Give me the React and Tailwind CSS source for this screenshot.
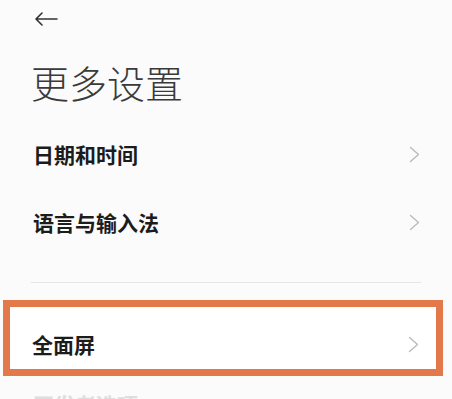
import React from "react";

const font = { fontFamily: '"Noto Sans CJK SC", "Noto Sans", sans-serif' };

function Chevron() {
  return (
    <svg width="11" height="17" viewBox="0 0 11 17" fill="none" className="shrink-0">
      <path d="M1.5 1.5 L9.5 8.5 L1.5 15.5" stroke="#b9b9b9" strokeWidth="1.3" strokeLinecap="round" strokeLinejoin="round" />
    </svg>
  );
}

function Row({ label }) {
  return (
    <div className="h-[68px] flex items-center justify-between pl-[33px] pr-[32px]">
      <span className="text-[21px] font-bold text-[#1c1c1c] leading-none">{label}</span>
      <Chevron />
    </div>
  );
}

export default function App() {
  return (
    <div className="w-[452px] h-[399px] overflow-hidden bg-[#fbfbfb]" style={font}>
      {/* top bar */}
      <div className="h-[38px] flex items-center pl-[34px]">
        <svg width="24" height="14" viewBox="0 0 24 14" fill="none">
          <path d="M23 7 H2 M8 1 L2 7 L8 13" stroke="#333" strokeWidth="1.6" strokeLinecap="round" strokeLinejoin="round" />
        </svg>
      </div>

      <div className="h-[82px] flex items-center pl-[31px] pt-[6px]">
        <h1 className="text-[38px] font-light text-[#3a3a3a] leading-none">更多设置</h1>
      </div>

      <Row label="日期和时间" />
      <Row label="语言与输入法" />

      <div className="mt-[26px] mx-[31px] h-px bg-[#e6e6e6]" />

      <div className="mt-[17px] ml-[3px] mr-[9px] h-[76px] border-[7px] border-[#e3784b] bg-white flex items-center justify-between pt-[12px] pl-[22px] pr-[17px]">
        <span className="text-[21px] font-bold text-[#1c1c1c] leading-none">全面屏</span>
        <Chevron />
      </div>

      <div className="pt-[18px] pl-[33px]">
        <span className="text-[21px] font-bold text-[#dedede] leading-none">开发者选项</span>
      </div>
    </div>
  );
}
